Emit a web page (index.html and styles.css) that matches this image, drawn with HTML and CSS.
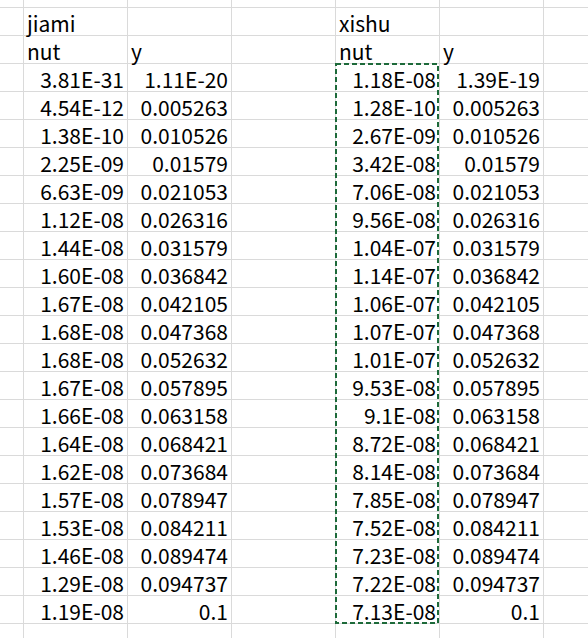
FILE: index.html
```html
<!DOCTYPE html>
<html>
<head>
<meta charset="utf-8">
<link rel="stylesheet" href="styles.css">
</head>
<body>
<div class="sheet">
  <div class="grid">
    <div class="row top"><div class="c"></div><div class="c"></div><div class="c"></div><div class="c"></div><div class="c"></div><div class="c"></div><div class="c"></div></div>
    <div class="row"><div class="c"></div><div class="c l">jiami</div><div class="c"></div><div class="c"></div><div class="c l">xishu</div><div class="c"></div><div class="c"></div></div>
    <div class="row"><div class="c"></div><div class="c l">nut</div><div class="c l">y</div><div class="c"></div><div class="c l">nut</div><div class="c l">y</div><div class="c"></div></div>
    <div class="row"><div class="c"></div><div class="c">3.81E-31</div><div class="c">1.11E-20</div><div class="c"></div><div class="c">1.18E-08</div><div class="c">1.39E-19</div><div class="c"></div></div>
    <div class="row"><div class="c"></div><div class="c">4.54E-12</div><div class="c">0.005263</div><div class="c"></div><div class="c">1.28E-10</div><div class="c">0.005263</div><div class="c"></div></div>
    <div class="row"><div class="c"></div><div class="c">1.38E-10</div><div class="c">0.010526</div><div class="c"></div><div class="c">2.67E-09</div><div class="c">0.010526</div><div class="c"></div></div>
    <div class="row"><div class="c"></div><div class="c">2.25E-09</div><div class="c">0.01579</div><div class="c"></div><div class="c">3.42E-08</div><div class="c">0.01579</div><div class="c"></div></div>
    <div class="row"><div class="c"></div><div class="c">6.63E-09</div><div class="c">0.021053</div><div class="c"></div><div class="c">7.06E-08</div><div class="c">0.021053</div><div class="c"></div></div>
    <div class="row"><div class="c"></div><div class="c">1.12E-08</div><div class="c">0.026316</div><div class="c"></div><div class="c">9.56E-08</div><div class="c">0.026316</div><div class="c"></div></div>
    <div class="row"><div class="c"></div><div class="c">1.44E-08</div><div class="c">0.031579</div><div class="c"></div><div class="c">1.04E-07</div><div class="c">0.031579</div><div class="c"></div></div>
    <div class="row"><div class="c"></div><div class="c">1.60E-08</div><div class="c">0.036842</div><div class="c"></div><div class="c">1.14E-07</div><div class="c">0.036842</div><div class="c"></div></div>
    <div class="row"><div class="c"></div><div class="c">1.67E-08</div><div class="c">0.042105</div><div class="c"></div><div class="c">1.06E-07</div><div class="c">0.042105</div><div class="c"></div></div>
    <div class="row"><div class="c"></div><div class="c">1.68E-08</div><div class="c">0.047368</div><div class="c"></div><div class="c">1.07E-07</div><div class="c">0.047368</div><div class="c"></div></div>
    <div class="row"><div class="c"></div><div class="c">1.68E-08</div><div class="c">0.052632</div><div class="c"></div><div class="c">1.01E-07</div><div class="c">0.052632</div><div class="c"></div></div>
    <div class="row"><div class="c"></div><div class="c">1.67E-08</div><div class="c">0.057895</div><div class="c"></div><div class="c">9.53E-08</div><div class="c">0.057895</div><div class="c"></div></div>
    <div class="row"><div class="c"></div><div class="c">1.66E-08</div><div class="c">0.063158</div><div class="c"></div><div class="c">9.1E-08</div><div class="c">0.063158</div><div class="c"></div></div>
    <div class="row"><div class="c"></div><div class="c">1.64E-08</div><div class="c">0.068421</div><div class="c"></div><div class="c">8.72E-08</div><div class="c">0.068421</div><div class="c"></div></div>
    <div class="row"><div class="c"></div><div class="c">1.62E-08</div><div class="c">0.073684</div><div class="c"></div><div class="c">8.14E-08</div><div class="c">0.073684</div><div class="c"></div></div>
    <div class="row"><div class="c"></div><div class="c">1.57E-08</div><div class="c">0.078947</div><div class="c"></div><div class="c">7.85E-08</div><div class="c">0.078947</div><div class="c"></div></div>
    <div class="row"><div class="c"></div><div class="c">1.53E-08</div><div class="c">0.084211</div><div class="c"></div><div class="c">7.52E-08</div><div class="c">0.084211</div><div class="c"></div></div>
    <div class="row"><div class="c"></div><div class="c">1.46E-08</div><div class="c">0.089474</div><div class="c"></div><div class="c">7.23E-08</div><div class="c">0.089474</div><div class="c"></div></div>
    <div class="row"><div class="c"></div><div class="c">1.29E-08</div><div class="c">0.094737</div><div class="c"></div><div class="c">7.22E-08</div><div class="c">0.094737</div><div class="c"></div></div>
    <div class="row"><div class="c"></div><div class="c">1.19E-08</div><div class="c">0.1</div><div class="c"></div><div class="c">7.13E-08</div><div class="c">0.1</div><div class="c"></div></div>
    <div class="row"><div class="c"></div><div class="c"></div><div class="c"></div><div class="c"></div><div class="c"></div><div class="c"></div><div class="c"></div></div>
  </div>
  <div class="selection">
    <svg width="104" height="561" viewBox="0 0 104 561"><rect x="1" y="1" width="102" height="559" fill="none" stroke="#1d6a3a" stroke-width="2" stroke-dasharray="5 3"/></svg>
  </div>
</div>
</body>
</html>
```

FILE: styles.css
```css
html, body {
  margin: 0;
  padding: 0;
  background: #fff;
  overflow: hidden;
}
.sheet {
  position: relative;
  width: 588px;
  height: 638px;
  overflow: hidden;
  font-family: "Noto Sans CJK SC", "Noto Sans", sans-serif;
  font-size: 21px;
  color: #000;
}
.grid {
  display: flex;
  flex-direction: column;
}
.row {
  display: grid;
  grid-template-columns: 24px repeat(5, 104px) 80px;
  height: 28px;
}
.row.top {
  height: 8px;
}
.c {
  box-sizing: border-box;
  border-right: 1px solid #dadada;
  border-bottom: 1px solid #dadada;
  display: flex;
  align-items: flex-end;
  justify-content: flex-end;
  padding: 0 3px 0 3px;
  line-height: 24px;
  white-space: nowrap;
}
.c.l {
  justify-content: flex-start;
}
.selection {
  position: absolute;
  left: 335px;
  top: 63px;
  width: 104px;
  height: 561px;
}
.selection svg {
  display: block;
}
```
